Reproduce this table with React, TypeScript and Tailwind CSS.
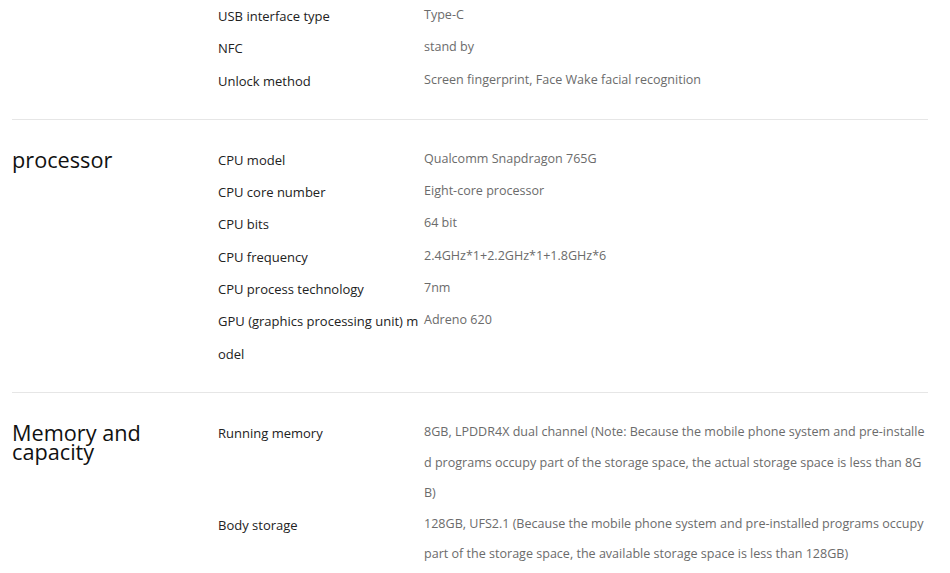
const sections = [
  {
    title: "",
    rows: [
      { label: "USB interface type", value: "Type-C" },
      { label: "NFC", value: "stand by" },
      { label: "Unlock method", value: "Screen fingerprint, Face Wake facial recognition" },
    ],
  },
  {
    title: "processor",
    rows: [
      { label: "CPU model", value: "Qualcomm Snapdragon 765G" },
      { label: "CPU core number", value: "Eight-core processor" },
      { label: "CPU bits", value: "64 bit" },
      { label: "CPU frequency", value: "2.4GHz*1+2.2GHz*1+1.8GHz*6" },
      { label: "CPU process technology", value: "7nm" },
      { label: "GPU (graphics processing unit) model", value: "Adreno 620" },
    ],
  },
  {
    title: "Memory and capacity",
    rows: [
      {
        label: "Running memory",
        value:
          "8GB, LPDDR4X dual channel (Note: Because the mobile phone system and pre-installed programs occupy part of the storage space, the actual storage space is less than 8GB)",
      },
      {
        label: "Body storage",
        value:
          "128GB, UFS2.1 (Because the mobile phone system and pre-installed programs occupy part of the storage space, the available storage space is less than 128GB)",
      },
    ],
  },
];

const App = () => {
  return (
    <div className="min-h-screen bg-white font-['Open_Sans',sans-serif]">
      <div className="ml-[12px] w-[916px]">
        {sections.map((section, i) => (
          <section
            key={i}
            className={`flex border-b border-[#e6e6e6] pb-[22px] ${i === 0 ? "pt-0" : "pt-[24px]"}`}
          >
            <h2 className="w-[206px] shrink-0 pt-[6px] pr-8 text-[21.7px] leading-[19px] font-normal text-[#111]">
              {section.title}
            </h2>
            <div className="flex-1">
              {section.rows.map((row) => (
                <div key={row.label} className="flex items-start">
                  <div className="w-[206px] shrink-0 break-all text-[13px] leading-[32.3px] text-[#222]">
                    {row.label}
                  </div>
                  <div className="flex-1 break-all pr-[1px] text-[12.55px] leading-[30.6px] text-[#6b6b6b]">
                    {row.value}
                  </div>
                </div>
              ))}
            </div>
          </section>
        ))}
      </div>
    </div>
  );
};

export default App;
